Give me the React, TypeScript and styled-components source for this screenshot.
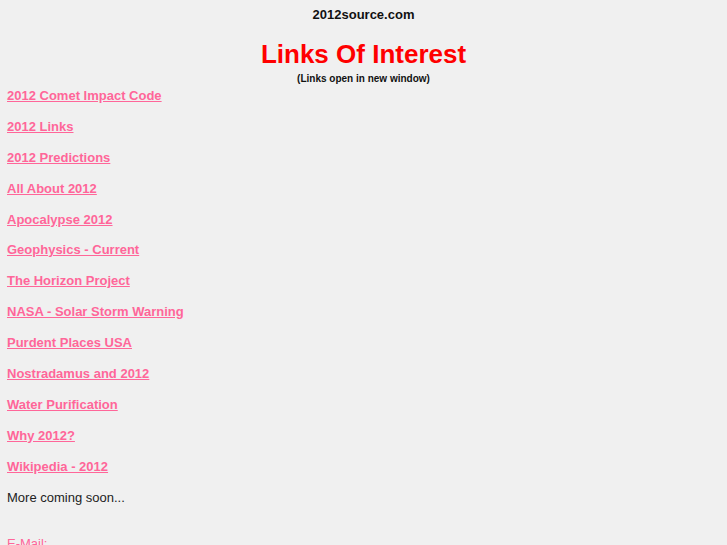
import { createGlobalStyle, styled } from "styled-components"

const GlobalStyle = createGlobalStyle`
  body {
    margin: 0;
    background: #f0f0f0;
    font-family: "Liberation Sans", Arial, sans-serif;
  }
`

const Page = styled.div`
  padding: 7px 7px 0;
`

const SiteName = styled.div`
  text-align: center;
  font-size: 13px;
  font-weight: bold;
  color: #111;
  line-height: 16px;
`

const Title = styled.h1`
  margin: 16px 0 0;
  text-align: center;
  font-size: 26px;
  line-height: 30px;
  color: #ff0000;
`

const Subtitle = styled.div`
  margin-top: 3px;
  text-align: center;
  font-size: 10px;
  font-weight: bold;
  color: #111;
  line-height: 14px;
`

const LinkList = styled.div`
  display: flex;
  flex-direction: column;
  gap: 12.9px;
  margin-top: 1px;
`

const Item = styled.a`
  font-size: 13px;
  font-weight: bold;
  line-height: 18px;
  color: #ff6699;
  text-decoration: underline;
  align-self: flex-start;
`

const Note = styled.div<{ $pink?: boolean }>`
  font-size: 13px;
  line-height: 18px;
  color: ${(p) => (p.$pink ? "#ff6699" : "#222")};
`

const EmailNote = styled(Note)`
  margin-top: 16px;
`

const links = [
  "2012 Comet Impact Code",
  "2012 Links",
  "2012 Predictions",
  "All About 2012",
  "Apocalypse 2012",
  "Geophysics - Current",
  "The Horizon Project",
  "NASA - Solar Storm Warning",
  "Purdent Places USA",
  "Nostradamus and 2012",
  "Water Purification",
  "Why 2012?",
  "Wikipedia - 2012",
]

export default function App() {
  return (
    <Page>
      <GlobalStyle />
      <SiteName>2012source.com</SiteName>
      <Title>Links Of Interest</Title>
      <Subtitle>(Links open in new window)</Subtitle>
      <LinkList>
        {links.map((l) => (
          <Item key={l} href="#" target="_blank">
            {l}
          </Item>
        ))}
        <Note>More coming soon...</Note>
        <EmailNote $pink>E-Mail:</EmailNote>
      </LinkList>
    </Page>
  )
}
